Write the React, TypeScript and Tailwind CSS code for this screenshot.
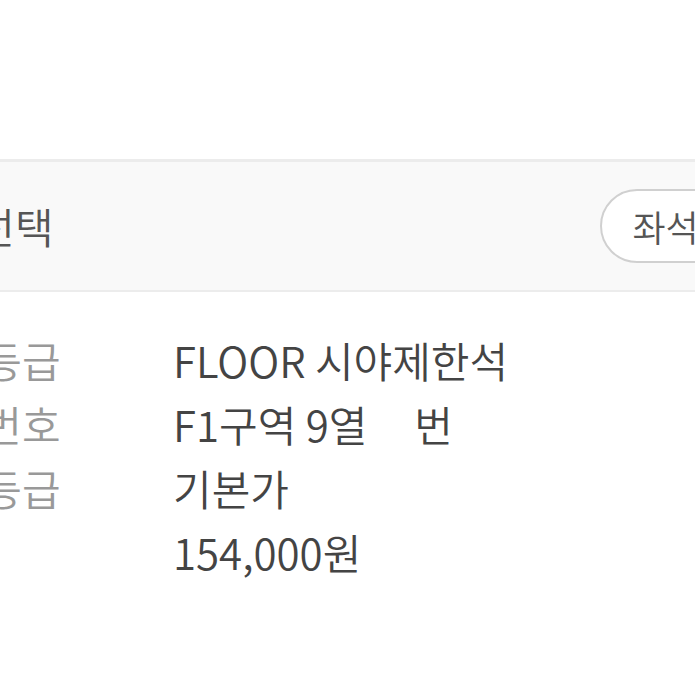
const rows = [
  { label: "좌석등급", value: "FLOOR 시야제한석" },
  { label: "좌석번호", value: "F1구역 9열\u00a0\u00a0\u00a0\u00a0\u00a0번" },
  { label: "가격등급", value: "기본가" },
  { label: "", value: "154,000원" },
];

export default function App() {
  return (
    <div
      className="w-[695px] h-[695px] overflow-hidden bg-white font-[350]"
      style={{ fontFamily: '"Noto Sans CJK KR", "Noto Sans", sans-serif' }}
    >
      <div className="h-[159px]" />
      <div className="flex items-center justify-between h-[133px] bg-[#f9f9f9] border-t-[3px] border-b-2 border-[#ececec]">
        <div className="ml-[-101px] text-[42px] text-[#555] whitespace-nowrap leading-none">
          좌석선택
        </div>
        <div className="mr-[-135px] flex items-center h-[74px] px-[30px] rounded-full border-2 border-[#d0d0d0] bg-white text-[36px] text-[#555] whitespace-nowrap leading-none">
          좌석배치도
        </div>
      </div>
      <div className="flex flex-col gap-[12px] pt-[42px] ml-[-94px]">
        {rows.map((r, i) => (
          <div key={i} className="flex items-center h-[52px] text-[42px] leading-none whitespace-nowrap">
            <span className="w-[267px] text-[#999]">{r.label}</span>
            <span className="text-[#444]">{r.value}</span>
          </div>
        ))}
      </div>
    </div>
  );
}
